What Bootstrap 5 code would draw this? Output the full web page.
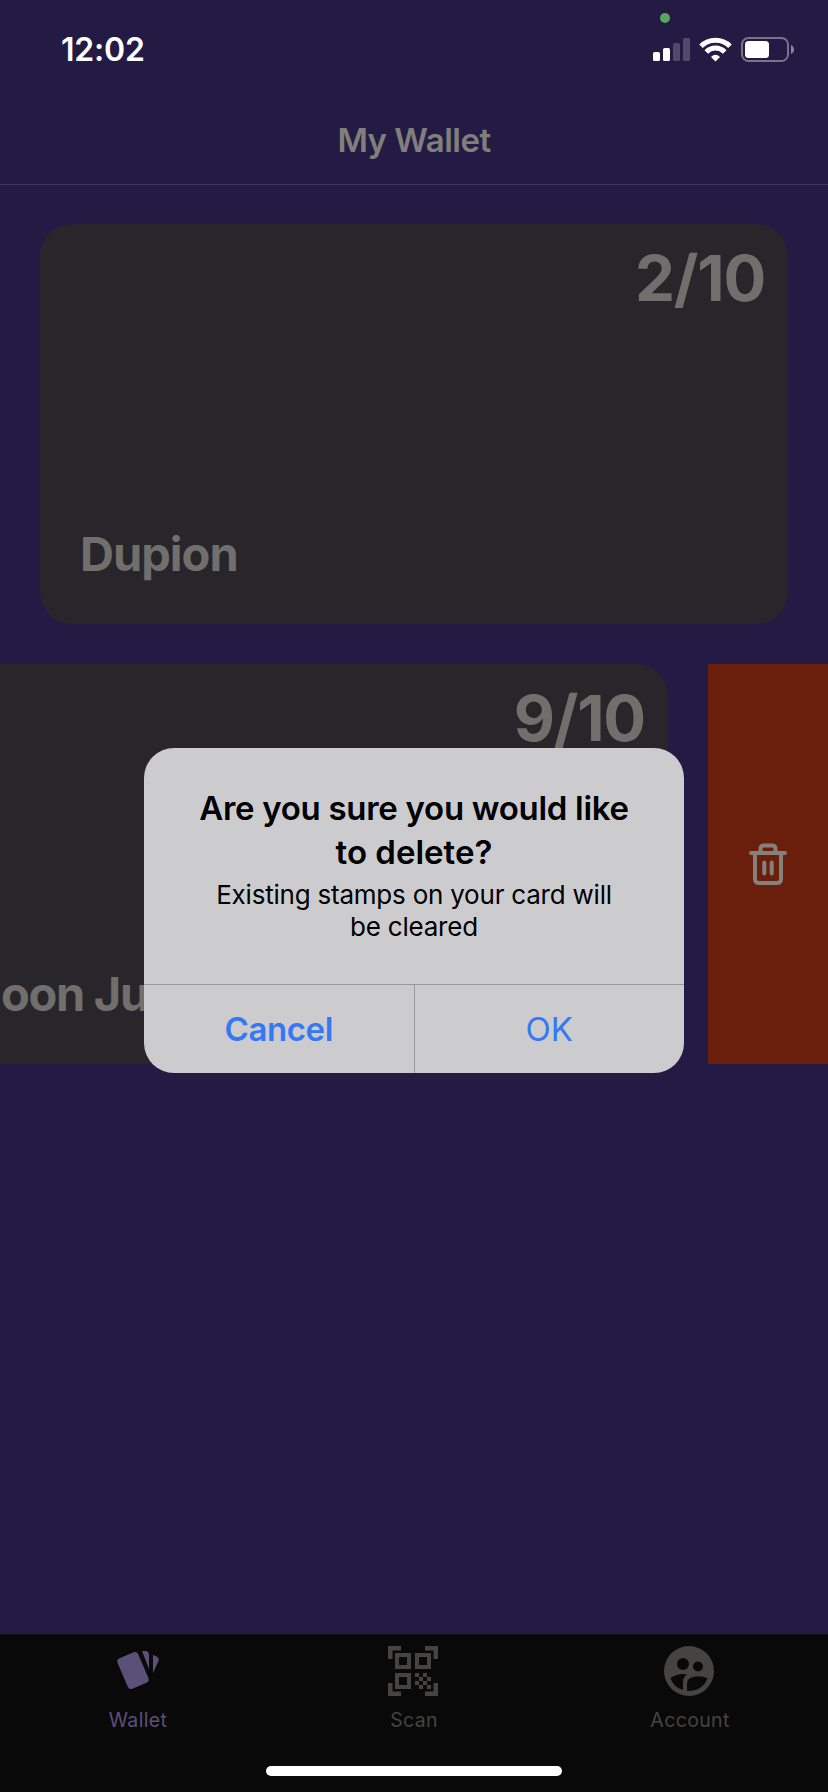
<!DOCTYPE html>
<html lang="en">
<head>
<meta charset="utf-8">
<meta name="viewport" content="width=device-width, initial-scale=1">
<title>My Wallet</title>
<link rel="stylesheet" href="https://cdn.jsdelivr.net/npm/bootstrap@5.3.0/dist/css/bootstrap.min.css">
<style>
body{background:#241b45;font-family:Inter,"Liberation Sans",sans-serif;height:1792px;color:#706f6c}
.phone{height:1792px}
.status-bar{height:100px;padding:27px 34px 0 61px;color:#fff}
.clock{font-size:32px;font-weight:600;line-height:46px;letter-spacing:-.2px}
.status-icons{margin-top:7px}
.camera-dot{left:660px;top:13px;width:10px;height:10px;background:#58a65c}
.title-bar{height:85px;border-bottom:1px solid #3e365c;color:#807f7b;font-size:33px;font-weight:600;line-height:80px;letter-spacing:-.5px}
.wallet-list{padding-top:39px;gap:40px}
.stamp-card{width:748px;height:400px;background:#28252b;border-radius:32px;padding:18px 23px 36px 40px}
.stamp-count{font-size:63.5px;font-weight:700;line-height:72px;letter-spacing:-1.2px}
.stamp-name{font-size:47px;font-weight:700;line-height:68px;letter-spacing:-1px}
.swiped{margin-left:-80px;padding-left:38.5px}
.swiped .stamp-name{letter-spacing:-1.3px}
.delete-action{width:120px;height:400px;background:#691f0c;color:#858079}
.alert-box{left:144px;top:748px;width:540px;height:325px;background:#cccccf;border-radius:30px;color:#000}
.alert-text{height:236px;padding-top:38px}
.alert-title{font-size:33px;font-weight:600;line-height:44px}
.alert-title .tight{letter-spacing:-.3px}
.alert-message{font-size:26px;line-height:32px;margin-top:5px;letter-spacing:-.22px}
.alert-actions{height:89px;border-top:1px solid #98989d;font-size:33px;line-height:88px;color:#3478f6}
.alert-actions .fw-semibold{letter-spacing:-.4px}
.alert-actions>div+div{border-left:1px solid #98989d}
.tab-bar{height:158px;background:#090909;color:#454442;border-top:1px solid #121115}
.tab-label{font-size:19.5px;line-height:24px;margin-top:11px;letter-spacing:.35px}
.tab-on{color:#5a5178}
.home-bar{left:266px;bottom:16px;width:296px;height:10px;background:#fff}
</style>
</head>
<body>
<div class="phone position-relative d-flex flex-column overflow-hidden">
  <header class="status-bar d-flex justify-content-between">
    <div class="clock">12:02</div>
    <svg class="status-icons" width="144" height="30" viewBox="650 34 144 30">
      <g fill="#fff"><rect x="653" y="52" width="7" height="9" rx="1.6"/><rect x="663" y="48" width="7" height="13" rx="1.6"/></g>
      <g fill="#514969"><rect x="673" y="43" width="7" height="18" rx="1.6"/><rect x="683" y="38" width="7" height="23" rx="1.6"/></g>
      <g fill="none" stroke="#fff" stroke-width="5"><path d="M701 46.200A20.500 20.500 0 0 1 730 46.200"/><path d="M706.300 51.900A13 13 0 0 1 724.700 51.900"/></g>
      <path fill="#fff" d="M711 57Q715.500 52.500 720 57L715.500 61.500Z"/>
      <rect x="742" y="38" width="46" height="23" rx="6.500" fill="none" stroke="#797388" stroke-width="2"/>
      <rect x="745" y="41" width="24" height="17" rx="3.500" fill="#fff"/>
      <path fill="#8b8699" d="M791 45Q794 46.500 794 49.500T791 54Z"/>
    </svg>
  </header>
  <span class="camera-dot position-absolute rounded-circle"></span>
  <div class="title-bar text-center">My Wallet</div>
  <main class="wallet-list d-flex flex-column flex-grow-1">
    <section class="stamp-card mx-auto d-flex flex-column justify-content-between">
      <div class="stamp-count text-end">2/10</div>
      <div class="stamp-name">Dupion</div>
    </section>
    <div class="d-flex justify-content-between">
      <section class="stamp-card swiped flex-shrink-0 d-flex flex-column justify-content-between">
        <div class="stamp-count text-end">9/10</div>
        <div class="stamp-name">Moon Ju</div>
      </section>
      <div class="delete-action d-flex align-items-center justify-content-center">
        <svg width="38" height="42" viewBox="749 843 38 42" fill="none" stroke="currentColor" stroke-width="4" stroke-linecap="round" stroke-linejoin="round"><path d="M751 853H785M755 853V879Q755 883 759 883H777Q781 883 781 879V853M760.500 852V849Q760.500 845.500 764 845.500H772Q775.500 845.500 775.500 849V852M764.300 862.500V873.500M771.700 862.500V873.500"/></svg>
      </div>
    </div>
  </main>
  <nav class="tab-bar row g-0 text-center">
    <div class="col tab-on">
      <svg class="d-block mx-auto mt-2" width="54" height="54" viewBox="111 1643 54 54" fill="currentColor"><rect x="-11.200" y="-16.500" width="22.400" height="33" rx="3.500" transform="translate(133 1670.500) rotate(-23)"/><path d="M142 1651H145Q149 1651 149 1655V1669ZM153 1655L156.500 1656.500Q159.500 1658 158.500 1661L153 1673Z"/></svg>
      <div class="tab-label">Wallet</div>
    </div>
    <div class="col">
      <svg class="d-block mx-auto mt-2" width="54" height="54" viewBox="387 1643 54 54" fill="currentColor"><path fill-rule="evenodd" d="M388 1646h13v4.500h-8.500v8.500h-4.500zM438 1646v13h-4.500v-8.500h-8.500v-4.500zM388 1696v-13h4.500v8.500h8.500v4.500zM438 1696h-13v-4.500h8.500v-8.500h4.500zM395 1653h16v16h-16zM399 1657v8h8v-8zM415 1653h16v16h-16zM419 1657v8h8v-8zM395 1673h16v16h-16zM399 1677v8h8v-8z"/><path d="M415 1673h4v4h-4zM423 1673h4v4h-4zM419 1677h4v4h-4zM427 1677h4v4h-4zM415 1681h4v4h-4zM423 1681h4v4h-4zM419 1685h4v4h-4zM427 1685h4v4h-4z"/></svg>
      <div class="tab-label">Scan</div>
    </div>
    <div class="col">
      <svg class="d-block mx-auto mt-2" width="54" height="54" viewBox="663 1643 54 54"><circle cx="689" cy="1671" r="25" fill="currentColor"/><g fill="#090909"><circle cx="683" cy="1664" r="6"/><circle cx="698" cy="1666.500" r="5"/><path d="M670.500 1678Q679 1672.500 687 1674.500Q683 1677 683 1682V1690Q673.500 1687.500 670.500 1678ZM687 1691V1683Q687 1677 698 1676.300Q703 1676.300 707.500 1678.300Q703 1691 687 1691Z"/></g></svg>
      <div class="tab-label">Account</div>
    </div>
  </nav>
  <div class="alert-box position-absolute overflow-hidden text-center">
    <div class="alert-text">
      <div class="alert-title"><span class="tight">Are you sure you would like</span><br>to delete?</div>
      <div class="alert-message">Existing stamps on your card will<br>be cleared</div>
    </div>
    <div class="alert-actions row g-0">
      <div class="col fw-semibold">Cancel</div>
      <div class="col">OK</div>
    </div>
  </div>
  <div class="home-bar position-absolute rounded-pill"></div>
</div>
<script src="https://cdn.jsdelivr.net/npm/bootstrap@5.3.0/dist/js/bootstrap.bundle.min.js"></script>
</body>
</html>
